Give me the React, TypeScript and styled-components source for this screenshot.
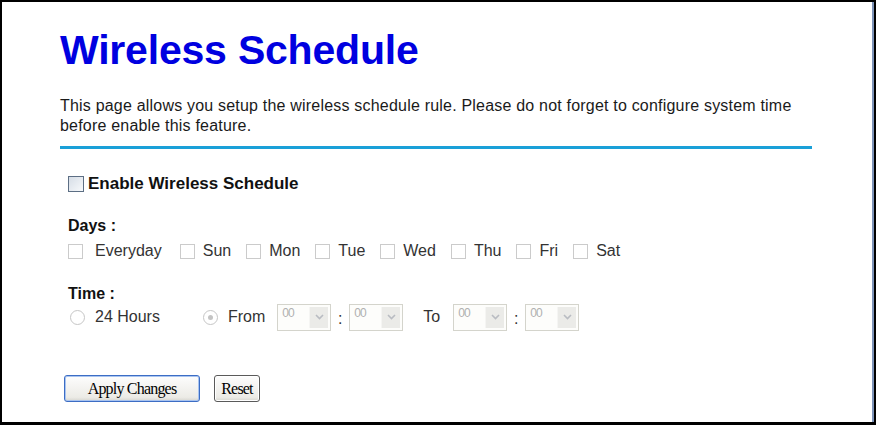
import styled, { createGlobalStyle } from "styled-components";

const GlobalStyle = createGlobalStyle`
  html, body {
    margin: 0;
    padding: 0;
    background: #ffffff;
  }
`;

const days = ["Everyday", "Sun", "Mon", "Tue", "Wed", "Thu", "Fri", "Sat"];

const Chevron = () => (
  <svg width="9" height="6" viewBox="0 0 9 6">
    <path d="M1 1 L4.5 4.5 L8 1" fill="none" stroke="#b9bcc2" strokeWidth="1.6" />
  </svg>
);

const TimeSelect = () => (
  <SelectBox>
    <SelectValue>00</SelectValue>
    <SelectArrow>
      <Chevron />
    </SelectArrow>
  </SelectBox>
);

const App = () => {
  return (
    <>
      <GlobalStyle />
      <Frame>
        <Title>Wireless Schedule</Title>
        <Intro>
          This page allows you setup the wireless schedule rule. Please do not
          forget to configure system time before enable this feature.
        </Intro>
        <Rule />

        <Section>
          <EnableRow>
            <EnableBox type="checkbox" />
            <EnableLabel>Enable Wireless Schedule</EnableLabel>
          </EnableRow>

          <GroupLabel $top={24}>Days :</GroupLabel>
          <DayRow>
            {days.map((day) => (
              <DayItem key={day} $wide={day === "Everyday"}>
                <DayBox type="checkbox" disabled />
                <span>{day}</span>
              </DayItem>
            ))}
          </DayRow>

          <GroupLabel $top={25}>Time :</GroupLabel>
          <TimeRow>
            <RadioItem $width={119}>
              <Radio />
              <span>24 Hours</span>
            </RadioItem>
            <RadioItem>
              <Radio $checked />
              <span>From</span>
            </RadioItem>
            <TimeSelect />
            <Colon>:</Colon>
            <TimeSelect />
            <ToLabel>To</ToLabel>
            <TimeSelect />
            <Colon>:</Colon>
            <TimeSelect />
          </TimeRow>
        </Section>

        <Buttons>
          <Button $primary>Apply Changes</Button>
          <Button>Reset</Button>
        </Buttons>
      </Frame>
    </>
  );
};

const Frame = styled.div`
  width: 876px;
  height: 425px;
  box-sizing: border-box;
  border: 2px solid #000;
  border-bottom-width: 3px;
  box-shadow: inset -2px 0 0 #7d93b8;
  padding: 26px 0 0 58px;
  font-family: "Liberation Sans", Arial, sans-serif;
  color: #111;
  overflow: hidden;
`;

const Title = styled.h1`
  margin: 0;
  font-size: 41px;
  line-height: 44px;
  font-weight: bold;
  color: #0000e0;
  letter-spacing: -0.2px;
`;

const Intro = styled.p`
  margin: 24px 0 0;
  width: 750px;
  font-size: 16px;
  line-height: 20px;
  letter-spacing: 0.2px;
  color: #1a1a1a;
`;

const Rule = styled.div`
  width: 752px;
  height: 3px;
  margin-top: 10px;
  background: #1aa0d8;
`;

const Section = styled.div`
  padding-left: 8px;
`;

const EnableRow = styled.label`
  display: flex;
  align-items: center;
  gap: 4px;
  margin-top: 26px;
  height: 18px;
`;

const EnableBox = styled.input`
  appearance: none;
  margin: 0;
  width: 16px;
  height: 16px;
  border: 1px solid #5c6e84;
  background: linear-gradient(135deg, #d6dde6, #f7f9fb);
`;

const EnableLabel = styled.span`
  font-size: 17px;
  font-weight: bold;
  color: #111;
`;

const GroupLabel = styled.div<{ $top: number }>`
  margin-top: ${(p) => p.$top}px;
  font-size: 16px;
  font-weight: bold;
  line-height: 18px;
  color: #111;
`;

const DayRow = styled.div`
  display: flex;
  align-items: center;
  margin-top: 7px;
  height: 18px;
  font-size: 16px;
  color: #333;
`;

const DayItem = styled.label<{ $wide?: boolean }>`
  display: flex;
  align-items: center;
  gap: ${(p) => (p.$wide ? 12 : 8)}px;
  margin-right: ${(p) => (p.$wide ? 18 : 15)}px;
`;

const DayBox = styled.input`
  appearance: none;
  margin: 0;
  width: 15px;
  height: 15px;
  border: 1px solid #cbcbcb;
  background: #fff;
`;

const TimeRow = styled.div`
  display: flex;
  align-items: center;
  margin-top: 0;
  height: 28px;
  font-size: 16px;
  color: #333;
`;

const RadioItem = styled.label<{ $width?: number }>`
  display: flex;
  align-items: center;
  gap: 10px;
  width: ${(p) => (p.$width ? `${p.$width}px` : "auto")};
  margin-left: 2px;
  margin-right: 12px;
`;

const Radio = styled.span<{ $checked?: boolean }>`
  position: relative;
  width: 13px;
  height: 13px;
  border-radius: 50%;
  border: 1px solid #c6c6c6;
  background: #fff;

  &::after {
    content: "";
    display: ${(p) => (p.$checked ? "block" : "none")};
    position: absolute;
    left: 4px;
    top: 4px;
    width: 5px;
    height: 5px;
    border-radius: 50%;
    background: #c4c4c4;
  }
`;

const SelectBox = styled.div`
  display: flex;
  align-items: stretch;
  width: 54px;
  height: 27px;
  box-sizing: border-box;
  border: 1px solid #d4d4cc;
  background: #fdfdfb;
  padding: 2px;
`;

const SelectValue = styled.span`
  flex: 1;
  font-size: 12px;
  line-height: 13px;
  color: #b0b0b0;
  padding-left: 2px;
  letter-spacing: -1px;
`;

const SelectArrow = styled.span`
  display: flex;
  align-items: center;
  justify-content: center;
  width: 18px;
  background: #ebebe8;
  border-left: 1px solid #f5f5f3;
`;

const Colon = styled.span`
  width: 18px;
  text-align: center;
  padding-top: 4px;
`;

const ToLabel = styled.span`
  margin: 0 13px 0 20px;
`;

const Buttons = styled.div`
  display: flex;
  gap: 14px;
  margin-top: 44px;
  padding-left: 4px;
`;

const Button = styled.button<{ $primary?: boolean }>`
  height: 27px;
  padding: 0 ${(p) => (p.$primary ? 20 : 3)}px;
  font-family: "Liberation Serif", "Times New Roman", serif;
  font-size: 16px;
  letter-spacing: -0.8px;
  color: #000;
  border-radius: 3px;
  border: 1px solid ${(p) => (p.$primary ? "#3c6dc4" : "#5a5a5a")};
  box-shadow: ${(p) =>
    p.$primary ? "inset 0 0 0 1px #a9c4f0" : "inset 0 0 0 1px #ffffff"};
  background: linear-gradient(#fdfdfd, #ecebe6 85%, #d6d5cf);
  min-width: ${(p) => (p.$primary ? 136 : 46)}px;
`;

export default App;
